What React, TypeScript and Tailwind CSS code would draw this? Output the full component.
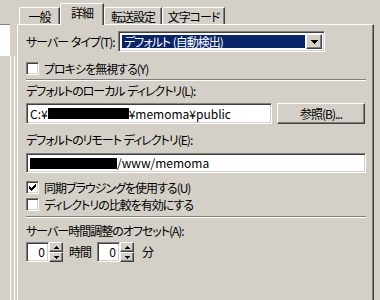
import React from 'react';

const FONT = "font-['Noto_Sans_CJK_JP','Noto_Sans',sans-serif] [font-feature-settings:'palt'] tracking-[-1px]";

const sunken = "border border-t-[#808080] border-l-[#808080] border-b-white border-r-white shadow-[inset_1px_1px_0_#404040,inset_-1px_-1px_0_#d4d0c8]";
const raised = "border border-t-white border-l-white border-b-[#404040] border-r-[#404040] shadow-[inset_-1px_-1px_0_#808080] bg-[#d4d0c8]";

const Gap = () => <span className="tracking-normal">{'\u00a0'}</span>;

const CheckBox = ({ checked, label }: { checked?: boolean; label: string }) => (
  <div className="h-[17px] flex items-center">
    <div className={`w-[13px] h-[13px] bg-white ${sunken} flex items-center justify-center`}>
      {checked && (
        <svg width="7" height="7" viewBox="0 0 7 7" shapeRendering="crispEdges">
          <path d="M6 0h1v3h-1v1h-1v1h-1v1h-1v1h-1v-1h-1v-1h-1v-3h1v1h1v1h1v-1h1v-1h1z" fill="#000" />
        </svg>
      )}
    </div>
    <span className="ml-[5px] leading-none whitespace-nowrap">{label}</span>
  </div>
);

const Tab = ({ label, active, w }: { label: string; active?: boolean; w: string }) => (
  <div
    className={`${w} flex items-center justify-center border-t border-l border-white rounded-tl-[2px] border-r border-r-[#404040] shadow-[inset_-1px_0_0_#808080] bg-[#d4d0c8] ${
      active ? 'h-[22px] -mb-[1px] relative z-10 pb-[3px]' : 'h-[17px] pt-[1px]'
    }`}
  >
    <span className="leading-none whitespace-nowrap">{label}</span>
  </div>
);

const Spin = () => (
  <div className="flex">
    <div className={`w-[23px] h-[20px] bg-white ${sunken} flex items-center justify-end pr-[4px] leading-none`}>0</div>
    <div className="w-[14px] h-[20px] flex flex-col">
      <div className={`h-[10px] ${raised} flex items-center justify-center`}>
        <svg width="5" height="3" viewBox="0 0 5 3" shapeRendering="crispEdges">
          <path d="M2 0h1v1h1v1h1v1h-5v-1h1v-1h1z" fill="#000" />
        </svg>
      </div>
      <div className={`h-[10px] ${raised} flex items-center justify-center`}>
        <svg width="5" height="3" viewBox="0 0 5 3" shapeRendering="crispEdges">
          <path d="M0 0h5v1h-1v1h-1v1h-1v-1h-1v-1h-1z" fill="#000" />
        </svg>
      </div>
    </div>
  </div>
);

export default function App() {
  return (
    <div className={`w-[380px] h-[300px] bg-[#d4d0c8] flex overflow-hidden text-[12px] text-black ${FONT}`}>
      {/* left edge of the site list */}
      <div className="w-[17px] shrink-0 flex flex-col">
        <div className="h-[24px]" />
        <div className="w-[10px] h-[32px] bg-white border-t border-[#808080]" />
        <div className="flex-1 flex">
          <div className="w-[10px]" />
          <div className="w-[1px] bg-white" />
          <div className="w-[3px]" />
          <div className="w-[1px] bg-white" />
        </div>
      </div>

      <div className="w-[357px] flex flex-col">
        {/* tabs */}
        <div className="h-[24px] flex items-end pl-[2px]">
          <Tab label="一般" w="w-[41px]" />
          <Tab label="詳細" w="w-[44px]" active />
          <Tab label="転送設定" w="w-[58px]" />
          <Tab label="文字コード" w="w-[63px]" />
        </div>

        {/* panel */}
        <div className="flex-1 border-t border-l border-white border-r border-r-[#404040] shadow-[inset_-1px_0_0_#808080] pl-[8px] pr-[7px] pt-[6px] flex flex-col">
          <div className="h-[21px] flex items-center">
            <span className="w-[92px] leading-none whitespace-nowrap">
              サーバー<Gap />タイプ(T):
            </span>
            <div className={`w-[207px] h-[21px] bg-white ${sunken} p-[2px] flex`}>
              <div className="flex-1 m-[1px] bg-[#0a246a] text-white flex items-center pl-[2px] leading-none whitespace-nowrap">
                <span>
                  デフォルト<Gap />(自動検出)
                </span>
              </div>
              <div className={`w-[16px] ${raised} flex items-center justify-center`}>
                <svg width="7" height="4" viewBox="0 0 7 4" shapeRendering="crispEdges">
                  <path d="M0 0h7v1h-1v1h-1v1h-1v1h-1v-1h-1v-1h-1v-1h-1z" fill="#000" />
                </svg>
              </div>
            </div>
          </div>

          <div className="mt-[8px]">
            <CheckBox label="プロキシを無視する(Y)" />
          </div>

          <div className="mt-[2px] h-[2px] border-t border-[#808080] border-b border-b-white" />

          <div className="mt-[2px] h-[16px] flex items-center leading-none whitespace-nowrap">
            <span>
              デフォルトのローカル<Gap />ディレクトリ(L):
            </span>
          </div>

          <div className="mt-[4px] flex">
            <div className={`w-[246px] h-[21px] bg-white ${sunken} flex items-center pl-[3px] leading-none whitespace-nowrap tracking-normal`}>
              <span>C:¥</span>
              <div className="w-[81px] h-[11px] bg-black" />
              <span>¥memoma¥public</span>
            </div>
            <button className={`ml-[5px] w-[88px] h-[21px] ${raised} flex items-center justify-center leading-none`}>
              参照(B)...
            </button>
          </div>

          <div className="mt-[8px] h-[16px] flex items-center leading-none whitespace-nowrap">
            <span>
              デフォルトのリモート<Gap />ディレクトリ(E):
            </span>
          </div>

          <div className={`mt-[5px] h-[20px] bg-white ${sunken} flex items-center pl-[3px] leading-none whitespace-nowrap tracking-normal`}>
            <div className="w-[87px] h-[11px] bg-black" />
            <span>/www/memoma</span>
          </div>

          <div className="mt-[6px]">
            <CheckBox checked label="同期ブラウジングを使用する(U)" />
            <CheckBox label="ディレクトリの比較を有効にする" />
          </div>

          <div className="mt-[3px] h-[2px] border-t border-[#808080] border-b border-b-white" />

          <div className="mt-[5px] h-[16px] flex items-center leading-none whitespace-nowrap">サーバー時間調整のオフセット(A):</div>

          <div className="mt-[3px] flex items-center">
            <Spin />
            <span className="ml-[6px] leading-none">時間</span>
            <div className="ml-[6px]">
              <Spin />
            </div>
            <span className="ml-[8px] leading-none">分</span>
          </div>
        </div>
      </div>
    </div>
  );
}
